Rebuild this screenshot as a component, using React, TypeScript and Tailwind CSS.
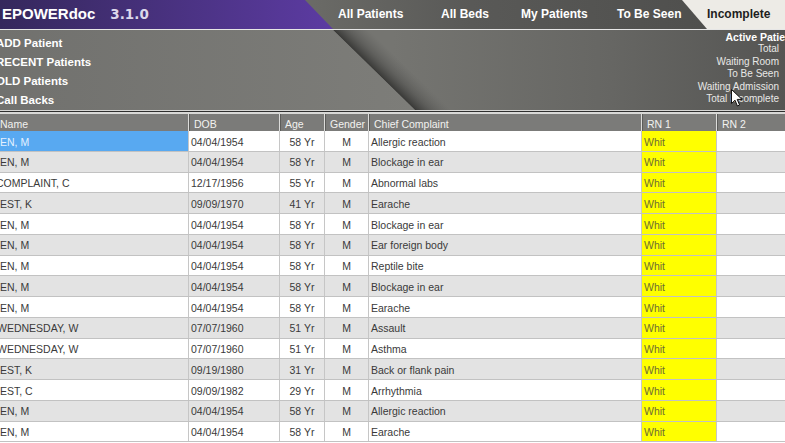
import React from 'react';

// ── Data ──────────────────────────────────────────────────────────────────────

type Row = {
  name: string;
  shift?: string; // names are clipped by the left edge of the window
  dob: string;
  age: string;
  complaint: string;
};

const ROWS: Row[] = [
  { name: 'EN, M', dob: '04/04/1954', age: '58 Yr', complaint: 'Allergic reaction' },
  { name: 'EN, M', dob: '04/04/1954', age: '58 Yr', complaint: 'Blockage in ear' },
  { name: 'COMPLAINT, C', shift: 'ml-[-4px]', dob: '12/17/1956', age: '55 Yr', complaint: 'Abnormal labs' },
  { name: 'EST, K', dob: '09/09/1970', age: '41 Yr', complaint: 'Earache' },
  { name: 'EN, M', dob: '04/04/1954', age: '58 Yr', complaint: 'Blockage in ear' },
  { name: 'EN, M', dob: '04/04/1954', age: '58 Yr', complaint: 'Ear foreign body' },
  { name: 'EN, M', dob: '04/04/1954', age: '58 Yr', complaint: 'Reptile bite' },
  { name: 'EN, M', dob: '04/04/1954', age: '58 Yr', complaint: 'Blockage in ear' },
  { name: 'EN, M', dob: '04/04/1954', age: '58 Yr', complaint: 'Earache' },
  { name: 'WEDNESDAY, W', shift: 'ml-[-3px]', dob: '07/07/1960', age: '51 Yr', complaint: 'Assault' },
  { name: 'WEDNESDAY, W', shift: 'ml-[-3px]', dob: '07/07/1960', age: '51 Yr', complaint: 'Asthma' },
  { name: 'EST, K', dob: '09/19/1980', age: '31 Yr', complaint: 'Back or flank pain' },
  { name: 'EST, C', dob: '09/09/1982', age: '29 Yr', complaint: 'Arrhythmia' },
  { name: 'EN, M', dob: '04/04/1954', age: '58 Yr', complaint: 'Allergic reaction' },
  { name: 'EN, M', dob: '04/04/1954', age: '58 Yr', complaint: 'Earache' },
];

const TABS = [
  { label: 'All Patients', w: 'w-[103px]' },
  { label: 'All Beds', w: 'w-[80px]' },
  { label: 'My Patients', w: 'w-[96px]' },
  { label: 'To Be Seen', w: 'w-[90px]' },
];

const MENU = ['ADD Patient', 'RECENT Patients', 'OLD Patients', 'Call Backs'];
const STATS = ['Total', 'Waiting Room', 'To Be Seen', 'Waiting Admission', 'Total Incomplete'];

const COLS = 'grid grid-cols-[188px_91px_45px_44px_273px_75px_69px]';

// ── Pieces ────────────────────────────────────────────────────────────────────

const TopBar = () => (
  <div className="relative h-[29px] overflow-hidden">
    <svg className="absolute inset-0" width="785" height="29" viewBox="0 0 785 29">
      <defs>
        <linearGradient id="purple" x1="0" y1="0" x2="1" y2="0">
          <stop offset="0" stopColor="#35285c" />
          <stop offset="1" stopColor="#5c3ba2" />
        </linearGradient>
        <linearGradient id="slate" x1="0" y1="0" x2="1" y2="0">
          <stop offset="0.4" stopColor="#6a6a66" />
          <stop offset="0.6" stopColor="#595957" />
          <stop offset="1" stopColor="#4c4c4a" />
        </linearGradient>
      </defs>
      <rect x="0" y="0" width="785" height="29" fill="url(#slate)" />
      <polygon points="0,0 305,0 333,29 0,29" fill="url(#purple)" />
      <polygon points="682,0 785,0 785,29 707,29" fill="#edebe6" />
    </svg>
    <div className="relative flex h-full items-center pb-[2px] font-['Liberation_Sans',Arial,sans-serif] font-bold">
      <div className="flex w-[338px] items-baseline pl-[2px] pt-[1px]">
        <span className="text-[15px] leading-none text-white">EPOWERdoc</span>
        <span className="ml-[15px] font-['DejaVu_Sans',sans-serif] text-[13.5px] leading-none text-[#dcd8ea]">
          3.1.0
        </span>
      </div>
      {TABS.map((t) => (
        <div key={t.label} className={`${t.w} text-[12px] text-white`}>
          {t.label}
        </div>
      ))}
      <div className="text-[12px] text-[#1e1e1e]">Incomplete</div>
    </div>
  </div>
);

const InfoPanel = () => (
  <div className="relative h-[81px] overflow-hidden border-t border-[#e6e6e6]">
    <svg className="absolute inset-0" width="785" height="81" viewBox="0 0 785 81">
      <defs>
        <linearGradient id="backdrop" x1="0" y1="0" x2="1" y2="0">
          <stop offset="0.5" stopColor="#757571" />
          <stop offset="0.78" stopColor="#666663" />
          <stop offset="1" stopColor="#555553" />
        </linearGradient>
        <linearGradient id="flat" x1="0" y1="0" x2="1" y2="0">
          <stop offset="0" stopColor="#71716e" />
          <stop offset="1" stopColor="#7d7d79" />
        </linearGradient>
        {/* shadow that falls off perpendicular to the fold */}
        <linearGradient id="shadow" gradientUnits="userSpaceOnUse" x1="374.5" y1="40.5" x2="392" y2="22.5">
          <stop offset="0" stopColor="#353533" stopOpacity="0.95" />
          <stop offset="0.45" stopColor="#4a4a48" stopOpacity="0.5" />
          <stop offset="1" stopColor="#5a5a58" stopOpacity="0" />
        </linearGradient>
      </defs>
      <rect x="0" y="0" width="785" height="81" fill="url(#backdrop)" />
      <polygon points="333,0 375,0 458,81 416,81" fill="url(#shadow)" />
      <polygon points="0,0 333,0 416,81 0,81" fill="url(#flat)" />
    </svg>
    <div className="relative flex h-full justify-between font-['Liberation_Sans',Arial,sans-serif]">
      <ul className="ml-[-4px] pt-[4px] text-[11.5px] font-bold leading-[18.9px] text-white">
        {MENU.map((m) => (
          <li key={m}>{m}</li>
        ))}
      </ul>
      <div className="flex flex-col items-end pr-[6px] pt-[1px] text-[10px] leading-[12.4px] text-[#e8e8e6]">
        <div className="mr-[-6px] text-[10.5px] font-bold text-white">Active Patie</div>
        {STATS.map((s) => (
          <div key={s}>{s}</div>
        ))}
      </div>
    </div>
    {/* mouse pointer sitting over the stats */}
    <svg className="absolute left-[731px] top-[59px]" width="12" height="18" viewBox="0 0 12 18">
      <path d="M0.5 0.5 L0.5 14.5 L4 11.2 L6.4 17 L8.6 16 L6.2 10.4 L11 10.4 Z" fill="#ffffff" stroke="#111111" strokeWidth="1" strokeLinejoin="round" />
    </svg>
  </div>
);

const HeaderCell = ({ children, first }: { children?: React.ReactNode; first?: boolean }) => (
  <div
    className={`flex items-end ${
      first ? 'pl-0' : 'border-l border-l-[#dcdcda] pl-[5px] shadow-[inset_1px_0_0_#5c5c5a]'
    }`}
  >
    {children}
  </div>
);

const Grid = () => (
  <div className="font-['Liberation_Sans',Arial,sans-serif] text-[10.5px]">
    {/* triple rule between panel and grid */}
    <div className="h-[4px] border-t border-b-2 border-t-[#d4d4d2] border-b-[#d8d8d6] bg-[#2e2e2e]" />
    <div className={`${COLS} h-[17px] bg-[#7b7b79] text-[#f2f2f0] leading-[14px]`}>
      <HeaderCell first>Name</HeaderCell>
      <HeaderCell>DOB</HeaderCell>
      <HeaderCell>Age</HeaderCell>
      <HeaderCell>Gender</HeaderCell>
      <HeaderCell>Chief Complaint</HeaderCell>
      <HeaderCell>RN 1</HeaderCell>
      <HeaderCell>RN 2</HeaderCell>
    </div>
    {ROWS.map((r, i) => {
      const bg = i % 2 === 0 ? 'bg-white' : 'bg-[#e3e3e3]';
      const cell = 'flex items-center border-l border-[#c6c6c6] pt-[3px]';
      return (
        <div key={i} className={`${COLS} h-[20.75px] border-b border-[#c2c2c2] ${bg} text-[#3a3a3a]`}>
          <div className={`flex items-center overflow-hidden pt-[3px] ${i === 0 ? 'bg-[#58a9f1] text-[#e4f1ff]' : ''}`}>
            <span className={`whitespace-nowrap ${r.shift ?? ''}`}>{r.name}</span>
          </div>
          <div className={`${cell} pl-[2px]`}>{r.dob}</div>
          <div className={`${cell} justify-center`}>{r.age}</div>
          <div className={`${cell} justify-center`}>M</div>
          <div className={`${cell} pl-[2px]`}>{r.complaint}</div>
          <div className={`${cell} bg-[#ffff00] pl-[2px] text-[#6e6e34]`}>Whit</div>
          <div className={cell} />
        </div>
      );
    })}
  </div>
);

// ── App ───────────────────────────────────────────────────────────────────────

export default function App() {
  return (
    <div className="h-[443px] w-[785px] overflow-hidden bg-white">
      <TopBar />
      <InfoPanel />
      <Grid />
    </div>
  );
}
